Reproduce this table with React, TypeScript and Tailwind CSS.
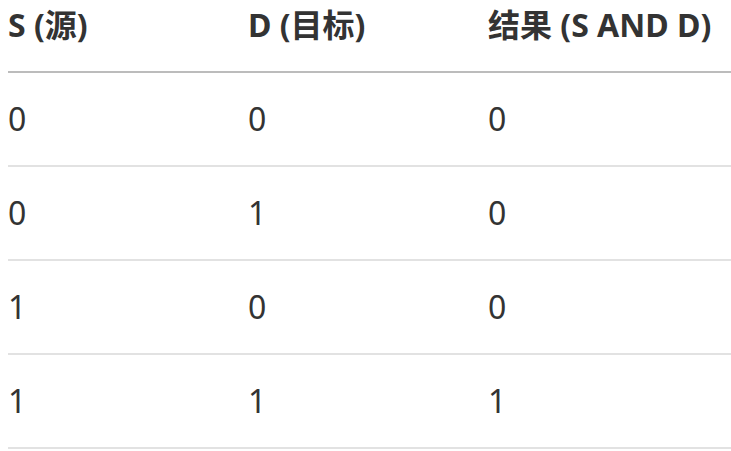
import React from 'react';

// Truth table rows for S AND D
const ROWS = [
    ['0', '0', '0'],
    ['0', '1', '0'],
    ['1', '0', '0'],
    ['1', '1', '1'],
];

const HEADERS = ['S (源)', 'D (目标)', '结果 (S AND D)'];

const App: React.FC = () => {
    return (
        <div
            className="min-h-screen bg-white overflow-hidden text-[#333] text-[32px]"
            style={{ fontFamily: '"Noto Sans", "Noto Sans CJK SC", sans-serif' }}
        >
            <div className="ml-2 w-[730px]">
                {/* Header */}
                <div className="grid grid-cols-[240px_240px_1fr] h-[73px] border-b-2 border-[#bcbcbc] font-bold">
                    {HEADERS.map((h) => (
                        <div key={h} className="leading-none pt-[9px]">{h}</div>
                    ))}
                </div>

                {/* Body rows */}
                {ROWS.map((row, i) => (
                    <div
                        key={i}
                        className="grid grid-cols-[240px_240px_1fr] h-[94px] items-center border-b-2 border-[#e2e2e2]"
                    >
                        {row.map((cell, j) => (
                            <div key={j} className="leading-none">{cell}</div>
                        ))}
                    </div>
                ))}
            </div>
        </div>
    );
};

export default App;
